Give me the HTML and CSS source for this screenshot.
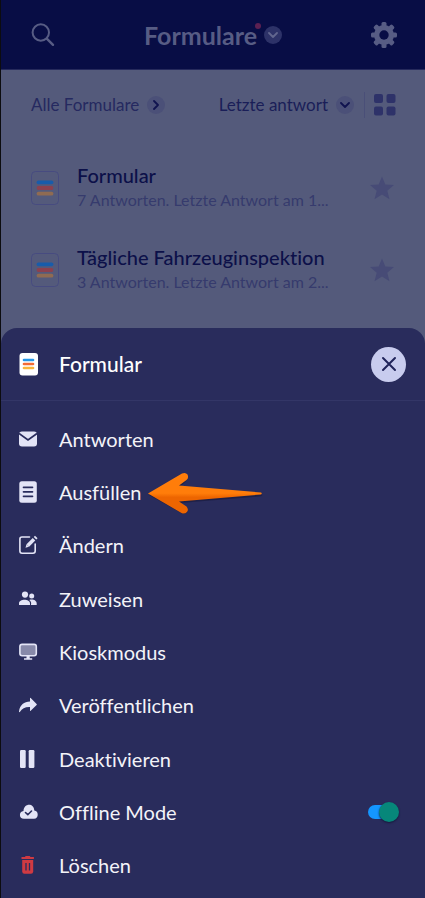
FILE: index.html
```html
<!DOCTYPE html>
<html lang="de">
<head>
<meta charset="utf-8">
<meta name="viewport" content="width=device-width, initial-scale=1">
<title>Formulare</title>
<link rel="stylesheet" href="styles.css">
</head>
<body>
<svg class="defs" aria-hidden="true">
  <symbol id="doc" viewBox="0 0 28 34">
    <rect x="0.5" y="0.5" width="27" height="33" rx="4" fill="none" stroke="#474b80"/>
    <path d="M7.500 11.300h13" stroke="#185cab" stroke-width="3.800" stroke-linecap="round"/>
    <path d="M7.500 17h13" stroke="#8b4150" stroke-width="3.800" stroke-linecap="round"/>
    <path d="M7.500 22.700h13" stroke="#8f6b52" stroke-width="3.800" stroke-linecap="round"/>
  </symbol>
  <symbol id="star" viewBox="0 0 26 24">
    <path d="M13 .5l3.300 8 8.700.6-6.700 5.600 2.200 8.500L13 18.600l-7.500 4.600 2.200-8.500L1 9.100l8.700-.6z" fill="#474b76"/>
  </symbol>
</svg>

<header class="topbar">
  <button class="plain" aria-label="Suchen">
    <svg width="24" height="24" viewBox="0 0 24 24" fill="none" stroke="#575c84" stroke-width="2" stroke-linecap="round"><circle cx="9.800" cy="9.500" r="8.200"/><path d="M16 15.800l6 6" stroke-width="2.400"/></svg>
  </button>
  <h1 class="title"><span class="title-text">Formulare</span><button class="round round-top" aria-label="Ansicht wechseln">
    <svg width="10" height="6" viewBox="0 0 10 6" fill="none" stroke="#62678f" stroke-width="1.800" stroke-linecap="round" stroke-linejoin="round"><path d="M1 1l4 4 4-4"/></svg></button></h1>
  <button class="plain" aria-label="Einstellungen">
    <svg width="26" height="26" viewBox="-13 -13 26 26"><g fill="#575c84"><rect x="-2.500" y="-13" width="5" height="26" rx="1.500"/><rect x="-2.500" y="-13" width="5" height="26" rx="1.500" transform="rotate(45)"/><rect x="-2.500" y="-13" width="5" height="26" rx="1.500" transform="rotate(90)"/><rect x="-2.500" y="-13" width="5" height="26" rx="1.500" transform="rotate(135)"/><circle r="10"/></g><circle r="4.700" fill="#080d45"/></svg>
  </button>
</header>

<div class="toolbar">
  <button class="filter">Alle Formulare
    <span class="round"><svg width="6" height="10" viewBox="0 0 6 10" fill="none" stroke="#10134f" stroke-width="1.800" stroke-linecap="round" stroke-linejoin="round"><path d="M1 1l4 4-4 4"/></svg></span>
  </button>
  <div class="toolbar-end">
    <button class="filter sort">Letzte antwort
      <span class="round"><svg width="10" height="6" viewBox="0 0 10 6" fill="none" stroke="#10134f" stroke-width="1.800" stroke-linecap="round" stroke-linejoin="round"><path d="M1 1l4 4 4-4"/></svg></span>
    </button>
    <button class="plain grid-toggle" aria-label="Rasteransicht">
      <svg width="22" height="22" viewBox="0 0 22 22" fill="#2e3269"><rect width="9" height="9" rx="2"/><rect x="12.500" width="9" height="9" rx="2"/><rect y="12.500" width="9" height="9" rx="2"/><rect x="12.500" y="12.500" width="9" height="9" rx="2"/></svg>
    </button>
  </div>
</div>

<ul class="forms">
  <li class="form">
    <svg class="form-icon" width="28" height="34"><use href="#doc"/></svg>
    <div class="form-text"><h2 class="form-name">Formular</h2><p class="form-meta">7 Antworten. Letzte Antwort am 1...</p></div>
    <button class="plain" aria-label="Favorit"><svg width="26" height="24"><use href="#star"/></svg></button>
  </li>
  <li class="form">
    <svg class="form-icon" width="28" height="34"><use href="#doc"/></svg>
    <div class="form-text"><h2 class="form-name">Tägliche Fahrzeuginspektion</h2><p class="form-meta">3 Antworten. Letzte Antwort am 2...</p></div>
    <button class="plain" aria-label="Favorit"><svg width="26" height="24"><use href="#star"/></svg></button>
  </li>
</ul>

<section class="sheet">
  <div class="sheet-head">
    <svg class="icon" width="20" height="24" viewBox="0 0 20 24"><rect x="0.500" y="1" width="18.500" height="22.500" rx="3" fill="#fff"/><path d="M5 8h9" stroke="#2496e8" stroke-width="2.600" stroke-linecap="round"/><path d="M5 12h9" stroke="#f36a35" stroke-width="2.600" stroke-linecap="round"/><path d="M5 16h9" stroke="#f9b53a" stroke-width="2.600" stroke-linecap="round"/></svg>
    <h2 class="sheet-title">Formular</h2>
    <button class="close" aria-label="Schließen"><svg width="16" height="16" viewBox="0 0 16 16" stroke="#20245a" stroke-width="2" stroke-linecap="round"><path d="M2 2l12 12M14 2L2 14"/></svg></button>
  </div>
  <div class="menu">
    <button class="item"><svg class="icon" width="20" height="20" viewBox="0 0 20 20" fill="#e3e4f6"><path d="M3 2.500h12q3 0 3 3v9q0 3-3 3H3q-3 0-3-3v-9q0-3 3-3z"/><path d="M0 4.500l9 6.500 9-6.500" fill="none" stroke="#292c5c" stroke-width="1.700"/></svg>Antworten</button>
    <div class="item-row">
      <button class="item"><svg class="icon" width="20" height="24" viewBox="0 0 20 24"><rect x="0.300" y="1.200" width="17.500" height="21.500" rx="2.500" fill="#e3e4f6"/><path d="M4.500 7.300h9M4.500 11.800h9M4.500 16.300h9" stroke="#292c5c" stroke-width="1.700" stroke-linecap="round"/></svg>Ausfüllen</button>
      <svg class="pointer" width="118" height="46" viewBox="0 0 118 46" aria-hidden="true"><defs><linearGradient id="flame" x2="0" y2="1"><stop offset="0.500" stop-color="#ff7d0a"/><stop offset="0.600" stop-color="#ed6500"/></linearGradient></defs><path d="M2 26L36 6q4-1.500 5 2 .5 3-8 9.800L115 25.500q1 1-1 1.800L33 34q9 6 8 8-2 4.500-6 2.400z" fill="#17193a" opacity=".6"/><path d="M1 24.500L35 4.500q3.500-1.500 5.500 1 1.500 3.500-1 5.500L32 16.500l82 7q1.500 1 0 2L32 32.500l7.500 5q2.500 3 .5 5.500-2.500 2.500-5.500 1z" fill="url(#flame)"/></svg>
    </div>
    <button class="item"><svg class="icon" width="20" height="20" viewBox="0 0 20 20" fill="none" stroke="#e3e4f6" stroke-width="1.600" stroke-linecap="round"><path d="M10.500 2H3Q.9 2 .9 4v12q0 2.200 2.100 2.200h11q2.200 0 2.200-2.200V9"/><path d="M8.800 10.500l6.200-6.200" stroke-width="3.600" stroke-linecap="butt"/><path d="M6.500 12.800l1-3.500 2.500 2.500z" fill="#e3e4f6" stroke="none"/><path d="M16 3.300l1.300-1.300" stroke-width="3.600" stroke-linecap="butt"/></svg>Ändern</button>
    <button class="item"><svg class="icon" width="20" height="20" viewBox="0 0 20 20" fill="#e3e4f6"><circle cx="6" cy="5.600" r="3.100"/><circle cx="12.700" cy="6.900" r="2.500"/><path d="M0 16v-1.500c0-5 11-5 11 0V16zM12 16c.6-2.500-.2-3.700-1.700-4.900C13.500 9.700 17.700 11.500 17.700 14.500V16z"/></svg>Zuweisen</button>
    <button class="item"><svg class="icon" width="20" height="20" viewBox="0 0 20 20"><rect x="0.900" y="2.400" width="16.400" height="11.400" rx="2.200" fill="#8789a9" stroke="#e3e4f6" stroke-width="1.600"/><path d="M7.500 14h3.200v2.300h2.500v1.500H5v-1.500h2.500z" fill="#e3e4f6"/></svg>Kioskmodus</button>
    <button class="item"><svg class="icon" width="20" height="20" viewBox="0 0 20 20" fill="#e3e4f6"><path d="M11 3.300q0-.9.700-.4l5.900 6q.6.600 0 1.200l-5.900 5.700q-.7.500-.7-.4v-3.300C6 11.900 3.300 13.500.8 17q-.8.500-.8-.6C1 10 5 6.900 11 6.600z"/></svg>Veröffentlichen</button>
    <button class="item"><svg class="icon" width="20" height="20" viewBox="0 0 20 20" fill="#e3e4f6"><rect x="1" y="1" width="5.700" height="18" rx="1.200"/><rect x="9.700" y="1" width="5.700" height="18" rx="1.200"/></svg>Deaktivieren</button>
    <label class="item"><svg class="icon" width="20" height="20" viewBox="0 0 20 20"><path d="M5 16.800C-.4 16.800-.3 9.400 4.500 9 4.800.9 15 .7 15.300 8.600c4.600.2 4.600 8.200-.3 8.200z" fill="#e3e4f6"/><path d="M6.500 10.500l2.300 2.200L12.500 9" fill="none" stroke="#292c5c" stroke-width="1.600" stroke-linecap="round" stroke-linejoin="round"/></svg>Offline Mode<input class="switch" type="checkbox" checked></label>
    <button class="item"><svg class="icon" width="20" height="20" viewBox="0 0 20 20" fill="#cf3a42"><path d="M2.500 2h3.400l.8-1h4l.8 1h3.400v2H2.500z"/><path d="M3.200 5h11v11.500q0 2.200-2.200 2.200H5.400q-2.200 0-2.200-2.200z"/><path d="M7 8v7.500M10.500 8v7.500" stroke="#292c5c" stroke-width="1.300"/></svg>Löschen</button>
  </div>
</section>
</body>
</html>
```
FILE: styles.css
```css
* { box-sizing: border-box; }

body {
  margin: 0;
  min-height: 100vh;
  display: flex;
  flex-direction: column;
  background: #545a7b;
  border-left: 1px solid #0c0c10;
  font-family: Lato, "Liberation Sans", sans-serif;
  font-variant-ligatures: none;
}

button {
  margin: 0;
  padding: 0;
  border: 0;
  background: none;
  color: inherit;
  font: inherit;
  font-variant-ligatures: none;
}

svg { display: block; flex: none; }
h1, h2, p, ul { margin: 0; padding: 0; }
.defs { display: none; }
.plain { display: flex; }

.topbar {
  display: flex;
  align-items: center;
  justify-content: space-between;
  height: 70px;
  padding: 0 28px 0 30px;
  background: #080d45;
  border-bottom: 1px solid #262a5c;
}

.title {
  display: flex;
  align-items: center;
  gap: 7px;
  font-size: 25px;
  line-height: 30px;
  color: #575c84;
}

.title-text { position: relative; }

.title-text::after {
  content: "";
  position: absolute;
  top: 3px;
  right: -4px;
  width: 6px;
  height: 6px;
  border-radius: 50%;
  background: #5c2052;
}

.round {
  display: flex;
  align-items: center;
  justify-content: center;
  width: 18px;
  height: 18px;
  border-radius: 50%;
  background: #4b5078;
}

.round-top { background: #2d3268; }

.toolbar {
  display: flex;
  align-items: center;
  justify-content: space-between;
  height: 70px;
  padding: 0 29px 0 30px;
}

.toolbar-end { display: flex; align-items: center; gap: 10px; }

.filter {
  display: flex;
  align-items: center;
  gap: 8px;
  font-size: 17px;
  line-height: 24px;
  color: #252960;
}

.sort { color: #1a1e58; }

.grid-toggle {
  padding: 2px 0 2px 9px;
  border-left: 1px solid #4a4f78;
}

.forms {
  padding: 7px 30px 17px;
  list-style: none;
}

.form { display: flex; align-items: center; height: 82px; }
.form-icon { margin-right: 18px; }
.form-text { flex: 1; min-width: 0; padding-bottom: 2px; white-space: nowrap; }

.form-name {
  font-size: 20px;
  line-height: 26px;
  font-weight: 500;
  color: #0c1049;
}

.form-meta { font-size: 16px; line-height: 24px; color: #363b6d; }

.sheet {
  flex: 1;
  display: flex;
  flex-direction: column;
  background: #292c5c;
  border-radius: 16px 16px 0 0;
}

.sheet-head {
  display: flex;
  align-items: center;
  height: 73px;
  padding: 0 19px 0 18px;
  border-bottom: 1px solid #333667;
}

.icon { margin-right: 20px; }
.sheet-title { flex: 1; font-size: 21px; line-height: 28px; font-weight: 500; color: #fff; }

.close {
  display: flex;
  align-items: center;
  justify-content: center;
  width: 35px;
  height: 35px;
  border-radius: 50%;
  background: #c8ccee;
}

.menu {
  flex: 1;
  display: flex;
  flex-direction: column;
  padding: 11px 0 6px;
}

.item {
  flex: 1 0 48px;
  display: flex;
  align-items: center;
  padding: 0 27px 0 18px;
  font-size: 20px;
  line-height: 28px;
  color: #f3f3f8;
}

.item-row { flex: 1 0 48px; display: flex; align-items: center; }
.item-row .item { flex: none; align-self: stretch; padding-right: 6px; }

.switch {
  appearance: none;
  position: relative;
  width: 30px;
  height: 14px;
  margin: 0 0 0 auto;
  border-radius: 7px;
  background: #1496ff;
}

.switch::before {
  content: "";
  position: absolute;
  top: -3px;
  right: -1px;
  width: 20px;
  height: 20px;
  border-radius: 50%;
  background: #07877a;
  box-shadow: 0 1px 2px #15183c;
}
```
